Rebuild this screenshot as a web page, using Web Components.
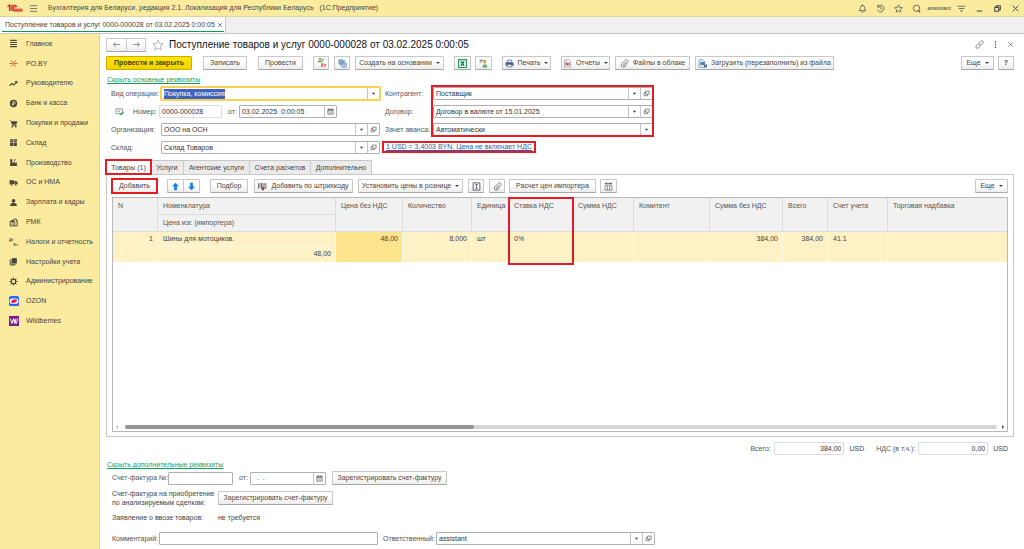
<!DOCTYPE html>
<html lang="ru">
<head>
<meta charset="utf-8">
<title>Поступление товаров и услуг</title>
<style>
html, body { margin: 0; height: 100%; }
body { font: 7px/10px "Liberation Sans", Arial, sans-serif; color: #444; background: #fff; }
</style>
</head>
<body>
<acc-app></acc-app>

<script>
const ICONS = {
  logo: '<svg viewBox="0 0 32 18"><g fill="none" stroke="#d8232a" stroke-width="2.200"><path d="M1 6.500 5 3v12"/><path d="M8 2v13"/><path d="M20 6.500a5.500 5.500 0 1 0-4.500 8.300H31"/><path d="M17.500 8a2.500 2.500 0 1 0-2 3.500H31"/></g></svg>',
  burger: '<svg viewBox="0 0 16 16"><path d="M1.500 3h13M1.500 8h13M1.500 13h13" stroke="#666" stroke-width="1.500"/></svg>',
  bell: '<svg viewBox="0 0 16 16"><path d="M2 12h12c-2-2-2-3-2.500-6A3.500 3.500 0 0 0 8 2.500 3.500 3.500 0 0 0 4.500 6C4 9 4 10 2 12zM6.500 14.500h3M8 1v2" fill="none" stroke="#555" stroke-width="1.500"/></svg>',
  history: '<svg viewBox="0 0 16 16"><path d="M3 5a6 6 0 1 1-.5 5M3 1.500V5.500h4M8.500 4.500V8.500l2.500 1.500" fill="none" stroke="#555" stroke-width="1.500"/></svg>',
  star: '<svg viewBox="0 0 16 16"><path d="M8 1.500 10 6l4.800.5-3.600 3.200 1 4.800L8 12l-4.200 2.500 1-4.800L1.200 6.500 6 6z" fill="none" stroke="currentColor" stroke-width="1.200"/></svg>',
  search: '<svg viewBox="0 0 16 16"><circle cx="8" cy="7.500" r="5.700" fill="none" stroke="#555" stroke-width="1.500"/><path d="m10.500 11 4 3.500" stroke="#444" stroke-width="2"/></svg>',
  filter: '<svg viewBox="0 0 16 16"><path d="M1 4h14M3 8h10" stroke="#555" stroke-width="1.500"/><path d="M5.500 11.500h5L8 14z" fill="#444"/></svg>',
  min: '<svg viewBox="0 0 16 16"><path d="M3 12.500h10" stroke="#555" stroke-width="2"/></svg>',
  restore: '<svg viewBox="0 0 16 16"><path d="M3 6h7v7H3zM6 6V3h7v7h-3" fill="none" stroke="#444" stroke-width="1.800"/></svg>',
  close: '<svg viewBox="0 0 16 16"><path d="m3 3 10 10M13 3 3 13" stroke="currentColor" stroke-width="1.700"/></svg>',
  link: '<svg viewBox="0 0 16 16"><g fill="none" stroke="#666" stroke-width="1.400"><path d="m7 5 3-3a2.500 2.500 0 0 1 3.700 3.600l-3 3a2.500 2.500 0 0 1-3.400 0"/><path d="m9 11-3 3a2.500 2.500 0 0 1-3.700-3.600l3-3a2.500 2.500 0 0 1 3.400 0"/></g></svg>',
  dots: '<svg viewBox="0 0 16 16"><path d="M7 2h2v3H7zM7 6.500h2v3H7zM7 11h2v3H7z" fill="#555"/></svg>',
  left: '<svg viewBox="0 0 16 16"><path d="M14.500 8H3M6.500 4 2.500 8l4 4" fill="none" stroke="#888" stroke-width="1.700"/></svg>',
  right: '<svg viewBox="0 0 16 16"><path d="M1.500 8H13M9.500 4l4 4-4 4" fill="none" stroke="#888" stroke-width="1.700"/></svg>',
  lines: '<svg viewBox="0 0 16 16"><path d="M2 2.500h12M2 6.200h12M2 9.800h12M2 13.500h12" stroke="#4a463c" stroke-width="1.900"/></svg>',
  spark: '<svg viewBox="0 0 16 16"><path d="M1 8h5M10 8h5M4 2.500l2.500 3.500M12 2.500 9.500 6M4 13.500 6.500 10M12 13.500 9.500 10M8 6v4" stroke="#e2462f" stroke-width="1.700"/></svg>',
  trend: '<svg viewBox="0 0 16 16"><path d="m1 12 4-4 3.500 2.500L13 6" fill="none" stroke="#4a463c" stroke-width="2"/><path d="M9.500 3.500H15V9z" fill="#4a463c"/></svg>',
  coin: '<svg viewBox="0 0 16 16"><circle cx="8" cy="8" r="6.500" fill="#4a463c"/><path d="M7 12V4.500h2a2 2 0 0 1 0 4.200H5.500M5.500 10.300H9" fill="none" stroke="#fbeb9f" stroke-width="1.300"/></svg>',
  cart: '<svg viewBox="0 0 16 16"><path d="M1 2h2.500l.5 2h11l-2 6H5L3 3H1z" fill="#4a463c"/><path d="M5 11.500h8.500" stroke="#4a463c" stroke-width="1.300"/><circle cx="6" cy="13.700" r="1.500" fill="#4a463c"/><circle cx="12" cy="13.700" r="1.500" fill="#4a463c"/></svg>',
  boxes: '<svg viewBox="0 0 16 16"><path d="M2 2h5.500v5.500H2zM8.500 2H14v5.500H8.500zM2 8.500h5.500V14H2zM8.500 8.500H14V14H8.500z" fill="#4a463c"/><path d="M3 5h3.500M9.500 5H13" stroke="#fbeb9f"/></svg>',
  factory: '<svg viewBox="0 0 16 16"><path d="M2 14V9l4-3v3l4-3v3l4-1v6zM2 2h4v4L2 8z" fill="#4a463c"/><path d="M10 5.500V3h2" stroke="#4a463c" stroke-width="1.500" fill="none"/></svg>',
  truck: '<svg viewBox="0 0 16 16"><path d="M1 4h8v7H1zM9.700 5.500H13l2.500 3V11H9.700z" fill="#4a463c"/><circle cx="4.500" cy="12" r="1.700" fill="#4a463c" stroke="#fbeb9f" stroke-width=".6"/><circle cx="12" cy="12" r="1.700" fill="#4a463c" stroke="#fbeb9f" stroke-width=".6"/></svg>',
  person: '<svg viewBox="0 0 16 16"><circle cx="8" cy="5" r="3.300" fill="#4a463c"/><path d="M2 14c0-4 2-4.500 4-5h4c2 .5 4 1 4 5z" fill="#4a463c"/></svg>',
  kassa: '<svg viewBox="0 0 16 16"><path d="M2 6h8v8H2zM8 2h5v4M13 4.500h1.500V14H10" fill="none" stroke="#4a463c" stroke-width="1.700"/><path d="M4 8.500h4M4 11h4M5 4h3v2H5z" stroke="#4a463c" stroke-width="1.300"/></svg>',
  books: '<svg viewBox="0 0 16 16"><path d="M5 2h9v9.500h-9z" fill="#4a463c"/><path d="M3.500 3.500v9.500H12M2 5v9.500h9" fill="none" stroke="#4a463c" stroke-width="1.300"/></svg>',
  gear: '<svg viewBox="0 0 16 16"><circle cx="8" cy="8" r="3.900" fill="none" stroke="#4a463c" stroke-width="2"/><path d="M8 1v3M8 12v3M1 8h3M12 8h3M3 3l2 2M11 11l2 2M13 3l-2 2M5 11l-2 2" stroke="#4a463c" stroke-width="1.900"/></svg>',
  ozon: '<svg viewBox="0 0 16 16"><rect width="16" height="16" rx="3" fill="#1f6bff"/><rect x="1" y="4" width="14" height="8.500" rx="4.200" fill="#fff"/><ellipse cx="8" cy="8.300" rx="4.800" ry="2.600" fill="#f91155" transform="rotate(-15 8 8)"/><path d="M8 16c5 0 8-2 8-5v2a3 3 0 0 1-3 3z" fill="#f91155"/></svg>',
  wb: '<svg viewBox="0 0 16 16"><rect width="16" height="16" fill="#7c1d8e"/><path d="m2 4 2.500 8L7 5l2 7 2.200-8M7.500 4l4 8L14 4" fill="none" stroke="#fff" stroke-width="1.500"/></svg>',
  grid: '<svg viewBox="0 0 16 16"><path d="M1.500 1.500h7v6h-7zM3.500 4h7v6h-7z" fill="#d5e2f0" stroke="#446a94" stroke-width="1.200"/><path d="M7 7.500h7.500v7H7z" fill="#fff" stroke="#3d7bb8" stroke-width="1.300"/><path d="M9 10h4M9 12.500h4M12 2v4" stroke="#3d7bb8" stroke-width="1.300"/></svg>',
  excel: '<svg viewBox="0 0 16 16"><path d="M1 1h14v14H1z" fill="#fff" stroke="#1e9a50" stroke-width="2"/><path d="m5 4 6 8M11 4l-6 8" stroke="#168043" stroke-width="2.300"/></svg>',
  worker: '<svg viewBox="0 0 16 16"><path d="M1 2.500h5M1 5.500h4M4 1l3 3" fill="none" stroke="#555" stroke-width="1.400"/><circle cx="10" cy="5.500" r="2.800" fill="#e8a75a"/><path d="M7 4.500a3 3 0 0 1 6 0z" fill="#c9962c"/><path d="M6.500 15c0-4 1.500-6 4-6s4 2 4 6z" fill="#4aa768"/><path d="m9 9 1.500 4L12 9z" fill="#f1d9b0"/></svg>',
  printer: '<svg viewBox="0 0 16 16"><path d="M4 2h8v4H4z" fill="#fff" stroke="#3f628c" stroke-width="1.300"/><path d="M1 6h14v6H1z" fill="#3f628c"/><path d="M4 9.500h8V14H4z" fill="#fff" stroke="#3f628c" stroke-width="1.300"/></svg>',
  report: '<svg viewBox="0 0 16 16"><path d="M2.500 1.500h8l3 3v10h-11z" fill="#fff" stroke="#888" stroke-width="1.200"/><path d="M5.500 5v6.500" stroke="#c33" stroke-width="2"/><path d="M8 7v4.500" stroke="#2a8e4c" stroke-width="2"/><path d="M10.500 6v5.500" stroke="#c33" stroke-width="2"/></svg>',
  clip: '<svg viewBox="0 0 16 16"><path d="M11.500 5 6.500 10a1.200 1.200 0 0 0 1.700 1.700L13.500 6.500A2.900 2.900 0 0 0 9.400 2.300L3.500 8.200a3.700 3.700 0 0 0 5 5.500l2-2" fill="none" stroke="#777" stroke-width="1.700"/></svg>',
  load: '<svg viewBox="0 0 16 16"><path d="M2 1.500h7l3 3v10H2z" fill="#fff" stroke="#55708c" stroke-width="1.200"/><path d="M4 5h8v6H4z" fill="#4a8ccb"/><path d="m9 8 6 6M15 9.500V14h-4.500" fill="none" stroke="#274a6e" stroke-width="1.700"/></svg>',
  up: '<svg viewBox="0 0 16 16"><path d="m8 1.500 6 6h-3.500v7h-5v-7H2z" fill="#1d7fe0"/></svg>',
  down: '<svg viewBox="0 0 16 16"><path d="m8 14.500 6-6h-3.500v-7h-5v7H2z" fill="#1d7fe0"/></svg>',
  barcode: '<svg viewBox="0 0 16 16"><path d="M1 2v10M3.500 2v8M6 2v8M8.500 2v5M11 2v5M14 2v10" stroke="#555" stroke-width="1.500"/><path d="M7 8h5v3l-2 4H8L5 11z" fill="#8a5050"/></svg>',
  fit: '<svg viewBox="0 0 16 16"><path d="M2 1.500h12v13H2z" fill="#fff" stroke="#446" stroke-width="1.500"/><path d="M8 4v8M6 5.500 8 3.500l2 2M6 10.500l2 2 2-2" fill="none" stroke="#446" stroke-width="1.400"/></svg>',
  book: '<svg viewBox="0 0 16 16"><path d="M2 5.500h12v9H2zM6 5.500v9M10 5.500v9" fill="none" stroke="#777" stroke-width="1.400"/><path d="M2 2.500h12M4 1 2 2.500 4 4M12 1l2 1.500L12 4" fill="none" stroke="#444" stroke-width="1.400"/></svg>',
  cal: '<svg viewBox="0 0 16 16"><path d="M2 3h12v11H2z" fill="none" stroke="#555" stroke-width="1.600"/><path d="M2 5h12M4.500 1v3M11.500 1v3" stroke="#555" stroke-width="2"/><path d="M4.500 8.500h7M4.500 11h7" stroke="#777" stroke-width="1.200"/></svg>',
  open: '<svg viewBox="0 0 16 16"><path d="M6 2.500h8v7H6z" fill="none" stroke="#555" stroke-width="1.500"/><path d="M6 6H2.500v7H10V9.500" fill="none" stroke="#555" stroke-width="1.500"/></svg>',
  caret: '<svg viewBox="0 0 16 16"><path d="M4 6h8l-4 5z" fill="#444"/></svg>',
  posted: '<svg viewBox="0 0 16 16"><path d="M1.500 3h12v9h-12z" fill="#fff" stroke="#888" stroke-width="1.300"/><path d="M4 5.500h7M4 8h5" stroke="#999" stroke-width="1.200"/><path d="m8 10.500 2.500 3 4.500-5" fill="none" stroke="#2ca05a" stroke-width="2.200"/></svg>'
};

function define(name, css, html, setup) {
  const tpl = document.createElement('template');
  customElements.define(name, class extends HTMLElement {
    constructor() { super(); this.attachShadow({ mode: 'open' }); }
    connectedCallback() {
      if (this.shadowRoot.firstChild) return;
      tpl.innerHTML = '<style>*{box-sizing:border-box}' + css + '</style>' +
        (typeof html === 'function' ? html(this) : html);
      this.shadowRoot.append(tpl.content.cloneNode(true));
      if (setup) setup(this);
    }
  });
}

define('acc-icon', `
  :host { display: inline-flex; flex: none; width: var(--size, 9px); height: var(--size, 9px); }
  svg { width: 100%; height: 100%; display: block; }
`, el => ICONS[el.getAttribute('name')] || '');

define('acc-dtkt', `
  :host { display: inline-grid; flex: none; width: 11px; font: bold 5px/5px "Liberation Sans", sans-serif; color: var(--dt, #2a9a57); }
  span + span { text-align: right; color: var(--kt, #d8393f); }
`, '<span>Дт</span><span>Кт</span>');

define('acc-mark', `
  :host { display: block; position: relative; }
  :host::after { content: ""; position: absolute; inset: var(--inset, -1px); border: 2px solid #e61b23; pointer-events: none; z-index: 2; }
`, '<slot></slot>');

define('acc-button', `
  :host { display: block; flex: none; }
  button { display: flex; align-items: center; justify-content: center; gap: 4px; width: 100%; height: 14px; padding: 0 2px;
    font: inherit; color: #444; white-space: nowrap; border: 1px solid #c8c8c8; border-bottom-color: #a8a8a8; border-radius: 1px;
    background: linear-gradient(#fff 40%, #ececec); }
  :host([primary]) button { font-weight: bold; color: #4a4210; border-color: #c9ac00; background: linear-gradient(#ffe600, #f2d200); }
  :host([strong]) button { font-weight: bold; }
  .caret { border: 2px solid transparent; border-top-color: #444; border-bottom: 0; }
`, el => `<button type="button"${el.title ? ` aria-label="${el.title}"` : ''}>${el.hasAttribute('icon') ? `<acc-icon name="${el.getAttribute('icon')}"></acc-icon>` : ''}<slot></slot>${el.hasAttribute('menu') ? '<span class="caret"></span>' : ''}</button>`,
el => { if (el.dataset.w) el.style.width = el.dataset.w + 'px'; });

define('acc-field', `
  :host { display: flex; align-items: center; height: 13px; }
  label { flex: none; width: var(--label, auto); white-space: nowrap; color: #555; }
  .box { flex: 1; display: flex; min-width: 0; height: 13px; border: 1px solid #b0b0b0; border-radius: 1px; background: #fff; }
  input { flex: 1; min-width: 0; width: 100%; border: 0; outline: 0; padding: 0 2px; margin: 0; font: inherit; color: #333; background: none; }
  button { flex: none; width: 12px; padding: 0; border: 0; border-left: 1px solid #c4c4c4; background: none; display: flex; align-items: center; justify-content: center; --size: 7px; }
  :host([quiet]) .box { border-color: #dcdcdc; }
  :host([number]) input { text-align: right; }
  :host([active]) .box { outline: 2px solid #f9d253; outline-offset: -1px; border-color: #f9d253; }
  ::selection { background: #3f63bd; color: #fff; }
`, el => {
  const a = n => el.getAttribute(n);
  return `${a('label') ? `<label for="f">${a('label')}</label>` : ''}<div class="box"><input id="f" type="text" value="${a('value') || ''}" aria-label="${a('label') || a('hint')}"${el.hasAttribute('quiet') ? ' readonly' : ''}>` +
    (a('tools') || '').split(' ').filter(Boolean).map(t => `<button type="button" aria-label="${t}"><acc-icon name="${t}"></acc-icon></button>`).join('') + '</div>';
}, el => {
  if (el.hasAttribute('active')) {
    const i = el.shadowRoot.querySelector('input');
    i.focus({ preventScroll: true });
    i.select();
  }
});

define('acc-titlebar', `
  :host { display: flex; align-items: center; height: 17px; padding: 0 4px 0 7px; background: #fbeb9f; border-bottom: 1px solid #ddd3a0; color: #444; }
  .logo { --size: 16px; height: 16px; }
  .burger { margin: 0 10px 0 6px; }
  .name { flex: 1; white-space: nowrap; }
  nav { display: flex; align-items: center; gap: 9px; }
  .user { font-size: 6px; margin: 0 -3px; }
`, `<acc-icon class="logo" name="logo"></acc-icon><acc-icon class="burger" name="burger"></acc-icon>
  <span class="name">Бухгалтерия для Беларуси, редакция 2.1. Локализация для Республики Беларусь &nbsp; (1С:Предприятие)</span>
  <nav><acc-icon name="bell"></acc-icon><acc-icon name="history"></acc-icon><acc-icon name="star"></acc-icon><acc-icon name="search"></acc-icon>
  <span class="user">assistant</span><acc-icon name="filter"></acc-icon><acc-icon name="min"></acc-icon><acc-icon name="restore"></acc-icon><acc-icon name="close"></acc-icon></nav>`);

define('acc-windowtabs', `
  :host { display: flex; height: 17px; background: #f0f0f0; border-bottom: 1px solid #c6c6c6; }
  .tab { position: relative; display: flex; align-items: center; gap: 2px; padding: 0 2px 0 5px; background: #fff; border-right: 1px solid #c6c6c6; color: #444; --size: 6px; }
  .tab::after { content: ""; position: absolute; left: 2px; right: 1px; bottom: 1px; height: 1px; background: #0a9a55; }
`, `<div class="tab"><span>Поступление товаров и услуг 0000-000028 от 03.02.2025 0:00:05</span><acc-icon name="close"></acc-icon></div>`);

define('acc-sidebar', `
  :host { display: block; background: #fbeb9f; border-right: 1px solid #ddd3a0; }
  nav { display: flex; flex-direction: column; height: 297px; }
  a { flex: 1; display: flex; align-items: center; gap: 8px; padding-left: 9px; color: #444; text-decoration: none; white-space: nowrap; }
  acc-dtkt { --dt: #4a463c; --kt: #4a463c; width: 9px; font-size: 4px; }
  .app { --size: 10px; margin: 0 -1px 0 0; }
`, () => '<nav>' + [
  ['lines', 'Главное'], ['spark', 'PO.BY'], ['trend', 'Руководителю'], ['coin', 'Банк и касса'], ['cart', 'Покупки и продажи'],
  ['boxes', 'Склад'], ['factory', 'Производство'], ['truck', 'ОС и НМА'], ['person', 'Зарплата и кадры'], ['kassa', 'РМК'],
  ['dtkt', 'Налоги и отчетность'], ['books', 'Настройки учета'], ['gear', 'Администрирование'], ['ozon', 'OZON'], ['wb', 'Wildberries']
].map(([i, t]) => `<a href="#">${i === 'dtkt' ? '<acc-dtkt></acc-dtkt>' : `<acc-icon name="${i}"${i === 'ozon' || i === 'wb' ? ' class="app"' : ''}></acc-icon>`}<span>${t}</span></a>`).join('') + '</nav>');

define('acc-goods', `
  :host { display: flex; flex-direction: column; flex: 1; min-height: 0; border: 1px solid #b8b8b8; position: relative; color: #555; }
  .scroll { flex: 1; overflow: hidden; }
  table { width: 100%; table-layout: fixed; border-collapse: separate; border-spacing: 0; }
  th { font-weight: normal; text-align: left; vertical-align: top; background: #f1f1f1; border-right: 1px solid #dcdcdc; border-bottom: 1px solid #dcdcdc; padding: 3px 4px 3px 5px; height: 17px; white-space: nowrap; }
  td { vertical-align: top; background: #fef1c5; border-right: 1px solid #fdf9e8; padding: 2px 4px 2px 5px; height: 15px; color: #444; white-space: nowrap; }
  td.line { border-bottom: 1px solid #fdf9e8; }
  td.num { text-align: right; }
  td.cur { background: #fee48c; }
  th:nth-child(5) { padding-right: 0; }
  tr > :last-child:not(.sub) { border-right: 0; }
  .bar { display: flex; align-items: center; gap: 3px; height: 8px; padding: 0 3px; }
  .track { flex: 1; height: 4px; border-radius: 2px; background: #d5d5d5; margin: 0 2px 0 4px; }
  .thumb { width: 40%; height: 4px; border-radius: 2px; background: #959595; }
  .arrow { border: 2px solid transparent; border-left-color: #444; border-right: 0; }
  .arrow.back { border-left: 0; border-right: 2px solid #bbb; }
  .mark { position: absolute; z-index: 2; left: 395px; width: 66px; top: -1px; height: 68px; border: 2px solid #e61b23; pointer-events: none; }
`, `<div class="scroll"><table>
  <colgroup><col style="width:45px"><col style="width:178px"><col style="width:67px"><col style="width:69px"><col style="width:37px"><col style="width:64px"><col style="width:61px"><col style="width:76px"><col style="width:73px"><col style="width:45px"><col style="width:60px"><col></colgroup>
  <thead>
  <tr><th rowspan="2">N</th><th>Номенклатура</th><th rowspan="2">Цена без НДС</th><th rowspan="2">Количество</th><th rowspan="2">Единица</th><th rowspan="2">Ставка НДС</th><th rowspan="2">Сумма НДС</th><th rowspan="2">Комитент</th><th rowspan="2">Сумма без НДС</th><th rowspan="2">Всего</th><th rowspan="2">Счет учета</th><th rowspan="2">Торговая надбавка</th></tr>
  <tr><th class="sub">Цена изг. (импортера)</th></tr></thead>
  <tbody>
  <tr><td rowspan="2" class="num">1</td><td class="line">Шины для мотоциков.</td><td rowspan="2" class="num cur">48,00</td><td rowspan="2" class="num">8,000</td><td rowspan="2">шт</td><td rowspan="2">0%</td><td rowspan="2"></td><td rowspan="2"></td><td rowspan="2" class="num">384,00</td><td rowspan="2" class="num">384,00</td><td rowspan="2">41.1</td><td rowspan="2"></td></tr>
  <tr><td class="num sub">48,00</td></tr></tbody></table></div>
  <div class="mark"></div>
  <div class="bar"><span class="arrow back"></span><div class="track"><div class="thumb"></div></div><span class="arrow"></span></div>`);

define('acc-document', `
  :host { display: flex; flex-direction: column; padding: 4px 10px 4px 6px; min-width: 0; }
  .row { display: flex; align-items: center; }
  .grow { flex: 1; }
  h1 { flex: 1; margin: 0; font-size: 10px; line-height: 13px; font-weight: normal; color: #111; white-space: nowrap; }
  .head { height: 13px; }
  .pair { display: flex; }
  .wintools { display: flex; gap: 7px; --size: 9px; color: #666; }
  .tools { margin-top: 5px; }
  .toggle { color: #17a05c; align-self: flex-start; margin-top: 5px; height: 10px; padding-left: 1px; }
  .form { display: grid; grid-template-columns: 269px 268px; gap: 5px; margin: 2px 0 0 5px; grid-auto-rows: 13px; }
  .left { --label: 50px; } .right { --label: 48px; }
  acc-mark.fields { grid-column: 2; grid-row: 1 / span 3; display: grid; gap: 5px; --inset: -2px -1px -1px 46px; }
  .rate { grid-column: 2; grid-row: 4; justify-self: start; --inset: 0 -4px 0 -3px; padding-left: 1px; line-height: 12px; height: 12px; }
  .rate a { color: #2b5fae; }
  .tabs { display: flex; margin-top: 6px; height: 14px; }
  .tabs button { height: 15px; font: inherit; color: #444; padding: 0; margin: 0; border: 1px solid #c8c8c8; border-left: 0; background: #ebebeb; white-space: nowrap; }
  .tabs button.on { background: #fff; border-bottom: 0; border-left: 1px solid #c8c8c8; width: 100%; }
  .panel { flex: 1; min-height: 0; display: flex; flex-direction: column; border: 1px solid #c8c8c8; padding: 4px 5px 4px; }
  .panel .row { margin-bottom: 4px; }
  .totals { justify-content: flex-end; margin-top: 5px; padding-right: 6px; }
  .extra { margin-left: 6px; }
`, `
  <div class="row head">
    <div class="pair"><acc-button icon="left" data-w="21" title="Назад"></acc-button><acc-button icon="right" data-w="20" title="Вперед" style="margin-left:-1px"></acc-button></div>
    <acc-icon name="star" style="--size:12px;color:#aaa;margin:0 5px 0 6px"></acc-icon>
    <h1>Поступление товаров и услуг 0000-000028 от 03.02.2025 0:00:05</h1>
    <div class="wintools"><acc-icon name="link"></acc-icon><acc-icon name="dots"></acc-icon><acc-icon name="close" style="--size:7px;margin-top:1px"></acc-icon></div>
  </div>
  <div class="row tools">
    <acc-button primary data-w="86">Провести и закрыть</acc-button>
    <acc-button data-w="44" style="margin-left:11px">Записать</acc-button>
    <acc-button data-w="45" style="margin-left:11px">Провести</acc-button>
    <acc-button data-w="16" style="margin-left:10px"><acc-dtkt></acc-dtkt></acc-button>
    <acc-button icon="grid" data-w="16" style="margin-left:5px" title="Структура"></acc-button>
    <acc-button menu data-w="89" style="margin-left:5px">Создать на основании</acc-button>
    <acc-button icon="excel" data-w="17" style="margin-left:10px" title="Excel"></acc-button>
    <acc-button icon="worker" data-w="17" style="margin-left:4px" title="Обмен"></acc-button>
    <acc-button icon="printer" menu data-w="49" style="margin-left:10px">Печать</acc-button>
    <acc-button icon="report" menu data-w="49" style="margin-left:10px">Отчеты</acc-button>
    <acc-button icon="clip" data-w="75" style="margin-left:5px">Файлы в облаке</acc-button>
    <acc-button icon="load" data-w="139" style="margin-left:5px">Загрузить (перезаполнить) из файла</acc-button>
    <span class="grow"></span>
    <acc-button menu data-w="33">Еще</acc-button>
    <acc-button strong data-w="16" style="margin-left:4px">?</acc-button>
  </div>
  <a href="#" class="toggle">Скрыть основные реквизиты</a>
  <div class="form">
    <acc-field class="left" active label="Вид операции:" value="Покупка, комиссия" tools="caret"></acc-field>
    <div class="row left" style="grid-column:1">
      <acc-icon name="posted" style="margin:0 9px 0 4px"></acc-icon>
      <acc-field quiet label="Номер:" value="0000-000028" style="--label:26px;width:89px;margin-right:6px"></acc-field>
      <acc-field label="от:" value="03.02.2025  0:00:05" tools="cal" style="--label:11px;width:109px"></acc-field>
    </div>
    <acc-field class="left" label="Организация:" value="ООО на ОСН" tools="caret open" style="grid-column:1"></acc-field>
    <acc-field class="left" label="Склад:" value="Склад Товаров" tools="caret open" style="grid-column:1"></acc-field>
    <acc-mark class="fields right">
      <acc-field label="Контрагент:" value="Поставщик" tools="caret open"></acc-field>
      <acc-field label="Договор:" value="Договор в валюте от 15.01.2025" tools="caret open"></acc-field>
      <acc-field label="Зачет аванса:" value="Автоматически" tools="caret"></acc-field>
    </acc-mark>
    <acc-mark class="rate"><a href="#">1 USD = 3,4003 BYN, Цена не включает НДС</a></acc-mark>
  </div>
  <div class="tabs" role="tablist">
    <acc-mark style="width:45px"><button role="tab" aria-selected="true" class="on">Товары (1)</button></acc-mark>
    <button role="tab" style="width:33px">Услуги</button><button role="tab" style="width:66px">Агентские услуги</button><button role="tab" style="width:61px">Счета расчетов</button><button role="tab" style="width:61px">Дополнительно</button>
  </div>
  <section class="panel">
    <div class="row">
      <acc-mark style="--inset:-1px"><acc-button data-w="45">Добавить</acc-button></acc-mark>
      <div class="pair" style="margin-left:10px"><acc-button icon="up" data-w="17" title="Вверх"></acc-button><acc-button icon="down" data-w="17" title="Вниз" style="margin-left:-1px"></acc-button></div>
      <acc-button data-w="38" style="margin-left:10px">Подбор</acc-button>
      <acc-button icon="barcode" data-w="99" style="margin-left:6px">Добавить по штрихкоду</acc-button>
      <acc-button menu data-w="105" style="margin-left:5px">Установить цены в рознице</acc-button>
      <acc-button icon="fit" data-w="16" style="margin-left:5px" title="Высота строк"></acc-button>
      <acc-button icon="clip" data-w="16" style="margin-left:5px" title="Файлы"></acc-button>
      <acc-button data-w="87" style="margin-left:4px">Расчет цен импортера</acc-button>
      <acc-button icon="book" data-w="17" style="margin-left:4px" title="Сравнение"></acc-button>
      <span class="grow"></span>
      <acc-button menu data-w="33">Еще</acc-button>
    </div>
    <acc-goods></acc-goods>
  </section>
  <div class="row totals">
    <acc-field quiet number label="Всего:" value="384,00" style="--label:24px;width:94px"></acc-field><span style="margin:0 12px 0 5px">USD</span>
    <acc-field quiet number label="НДС (в т.ч.):" value="0,00" style="--label:42px;width:112px"></acc-field><span style="margin-left:5px">USD</span>
  </div>
  <a href="#" class="toggle">Скрыть дополнительные реквизиты</a>
  <div class="row extra" style="margin-top:1px">
    <acc-field label="Счет-фактура №:" style="--label:56px;width:121px;margin-right:6px"></acc-field>
    <acc-field label="от:" value="  .  ." tools="cal" style="--label:11px;width:87px;margin-right:6px"></acc-field>
    <acc-button data-w="115">Зарегистрировать счет-фактуру</acc-button>
  </div>
  <div class="row extra" style="margin-top:4px">
    <span style="width:106px;line-height:9px">Счет-фактура на приобретение<br>по анализируемым сделкам:</span>
    <acc-button data-w="115">Зарегистрировать счет-фактуру</acc-button>
  </div>
  <div class="row extra" style="margin-top:6px"><span style="width:106px">Заявление о ввозе товаров:</span><span>не требуется</span></div>
  <div class="row extra" style="margin-top:9px">
    <acc-field label="Комментарий:" style="--label:47px;width:266px;margin-right:5px"></acc-field>
    <acc-field label="Ответственный:" value="assistant" tools="caret open" style="--label:53px;width:272px"></acc-field>
  </div>`);

define('acc-app', `
  :host { display: grid; grid-template: auto auto 1fr / 100px 1fr; min-height: 100vh; }
  acc-titlebar, acc-windowtabs { grid-column: 1 / -1; }
`, '<acc-titlebar></acc-titlebar><acc-windowtabs></acc-windowtabs><acc-sidebar></acc-sidebar><acc-document></acc-document>');
</script>
</body>
</html>
